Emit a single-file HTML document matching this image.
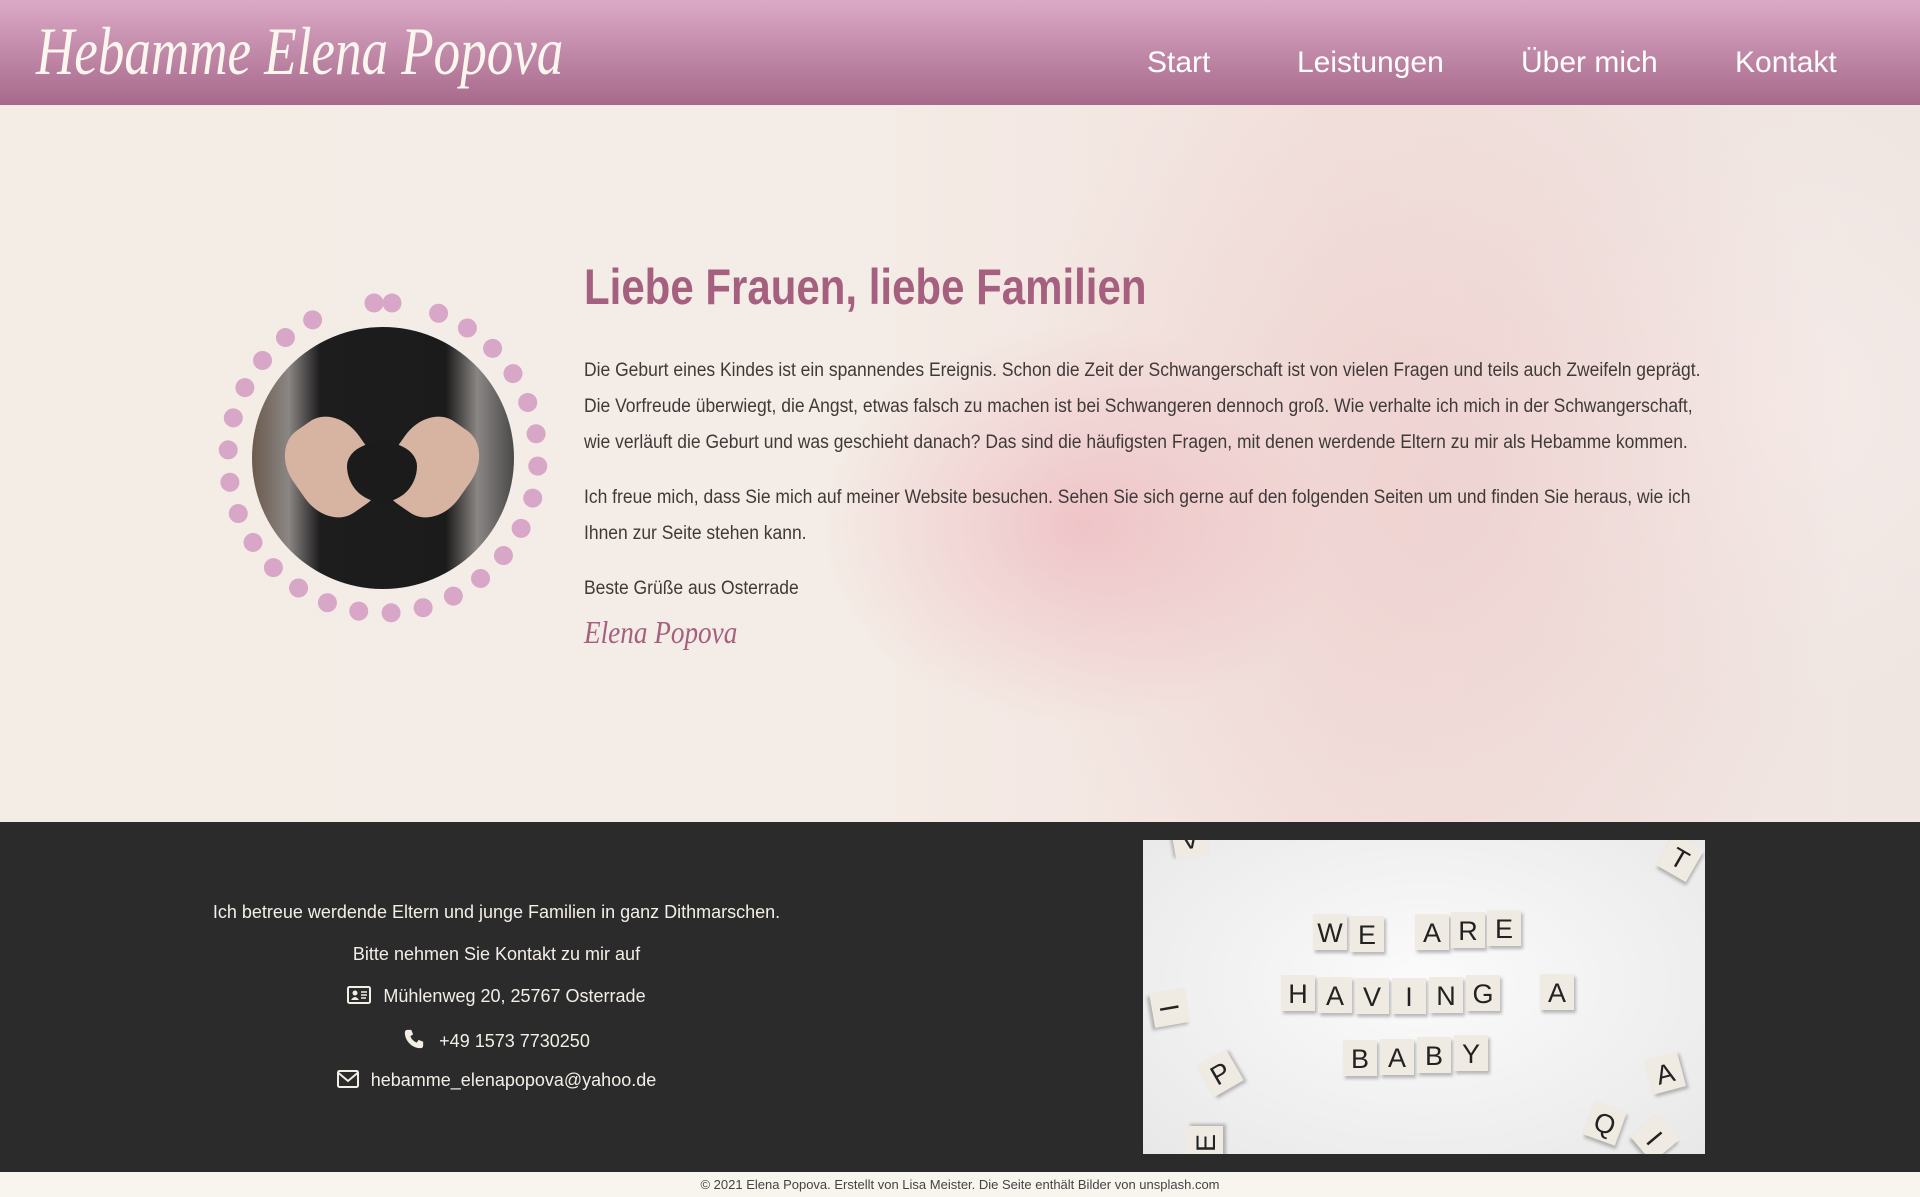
<!DOCTYPE html>
<html><head><meta charset="utf-8"><style>
*{margin:0;padding:0;box-sizing:border-box}
body{width:1920px;height:1197px;overflow:hidden;font-family:"Liberation Sans",sans-serif;background:#f8f4ee}
header{position:absolute;left:0;top:0;width:1920px;height:105px;background:linear-gradient(#dba9c6,#a7698b)}
.logo{position:absolute;left:36px;top:12px;font-family:"Liberation Serif",serif;font-style:italic;font-size:68px;color:#fbf6ee;transform:scaleX(.78);transform-origin:left;white-space:nowrap}
nav a{position:absolute;top:46px;font-size:30px;color:#fff;text-decoration:none}
.hero{position:absolute;left:0;top:105px;width:1920px;height:717px;overflow:hidden;
background:radial-gradient(ellipse 260px 200px at 1080px 420px,rgba(236,170,180,.55),transparent),
radial-gradient(ellipse 420px 520px at 1430px 380px,rgba(236,200,200,.6),transparent),
radial-gradient(ellipse 300px 300px at 1780px 300px,rgba(245,235,232,.9),transparent),
linear-gradient(90deg,#f3ede6 0%,#f4ece6 45%,#f2e2de 70%,#efe6e2 100%)}
h1{position:absolute;left:584px;font-size:50px;color:#a5607f;font-weight:bold;transform:scaleX(.84);transform-origin:left;white-space:nowrap}
.p{position:absolute;left:584px;font-size:19px;color:#3f3a38;line-height:36px;white-space:nowrap;transform:scaleX(.92);transform-origin:left}
.sig{position:absolute;left:584px;font-family:"Liberation Serif",serif;font-style:italic;font-size:32px;color:#a5607f;transform:scaleX(.85);transform-origin:left}
.photo{position:absolute;left:252px;width:262px;height:262px;border-radius:50%;overflow:hidden;
background:linear-gradient(90deg,#6b5a4c 0%,#8a8684 14%,#1d1d1d 26%,#1b1b1b 74%,#8a8684 86%,#4a4a4a 100%)}
.hand{position:absolute;background:#d7b3a2;border-radius:40%}
footer{position:absolute;left:0;top:822px;width:1920px;height:350px;background:#2b2b2b}
.f{position:absolute;left:0;width:993px;text-align:center;color:#f3eee6;font-size:18px}
.strip{position:absolute;left:0;top:1172px;width:1920px;height:25px;background:#f8f4ee;text-align:center;font-size:13px;color:#444;line-height:25px}
.img{position:absolute;left:1143px;top:840px;width:562px;height:314px;background:radial-gradient(ellipse at 50% 45%,#fbfbfb,#e8e8e8);overflow:hidden}
.t{position:absolute;width:34px;height:36px;background:#f0ebe2;box-shadow:2px 3px 3px rgba(0,0,0,.25);font-size:27px;color:#222;text-align:center;line-height:38px}
</style></head><body>
<header><div class="logo">Hebamme Elena Popova</div>
<nav><a style="left:1147px">Start</a><a style="left:1297px">Leistungen</a><a style="left:1521px">Über mich</a><a style="left:1735px">Kontakt</a></nav></header>
<div class="hero">
<svg style="position:absolute;left:213px;top:183px" width="340" height="340" viewBox="-170 -170 340 340">
<g fill="#d8a6c6">
<circle cx="-9" cy="-155" r="9.5"/><circle cx="9" cy="-155" r="9.5"/>
<circle r="9.5" cx="0" cy="-155" transform="rotate(21)"/><circle r="9.5" cx="0" cy="-155" transform="rotate(33)"/><circle r="9.5" cx="0" cy="-155" transform="rotate(45)"/><circle r="9.5" cx="0" cy="-155" transform="rotate(57)"/><circle r="9.5" cx="0" cy="-155" transform="rotate(69)"/><circle r="9.5" cx="0" cy="-155" transform="rotate(81)"/><circle r="9.5" cx="0" cy="-155" transform="rotate(93)"/><circle r="9.5" cx="0" cy="-155" transform="rotate(105)"/><circle r="9.5" cx="0" cy="-155" transform="rotate(117)"/><circle r="9.5" cx="0" cy="-155" transform="rotate(129)"/><circle r="9.5" cx="0" cy="-155" transform="rotate(141)"/><circle r="9.5" cx="0" cy="-155" transform="rotate(153)"/><circle r="9.5" cx="0" cy="-155" transform="rotate(165)"/><circle r="9.5" cx="0" cy="-155" transform="rotate(177)"/><circle r="9.5" cx="0" cy="-155" transform="rotate(189)"/><circle r="9.5" cx="0" cy="-155" transform="rotate(201)"/><circle r="9.5" cx="0" cy="-155" transform="rotate(213)"/><circle r="9.5" cx="0" cy="-155" transform="rotate(225)"/><circle r="9.5" cx="0" cy="-155" transform="rotate(237)"/><circle r="9.5" cx="0" cy="-155" transform="rotate(249)"/><circle r="9.5" cx="0" cy="-155" transform="rotate(261)"/><circle r="9.5" cx="0" cy="-155" transform="rotate(273)"/><circle r="9.5" cx="0" cy="-155" transform="rotate(285)"/><circle r="9.5" cx="0" cy="-155" transform="rotate(297)"/><circle r="9.5" cx="0" cy="-155" transform="rotate(309)"/><circle r="9.5" cx="0" cy="-155" transform="rotate(321)"/><circle r="9.5" cx="0" cy="-155" transform="rotate(333)"/>
</g></svg>
<div class="photo" style="top:222px">
<div class="hand" style="left:40px;top:90px;width:80px;height:100px;transform:rotate(-35deg)"></div>
<div class="hand" style="left:140px;top:90px;width:80px;height:100px;transform:rotate(35deg)"></div>
<div style="position:absolute;left:95px;top:115px;width:70px;height:60px;background:#1b1b1b;border-radius:50%/40% 40% 60% 60%"></div>
</div>
<h1 style="top:153px">Liebe Frauen, liebe Familien</h1>
<div class="p" style="top:248px">Die Geburt eines Kindes ist ein spannendes Ereignis. Schon die Zeit der Schwangerschaft ist von vielen Fragen und teils auch Zweifeln geprägt.<br>Die Vorfreude überwiegt, die Angst, etwas falsch zu machen ist bei Schwangeren dennoch groß. Wie verhalte ich mich in der Schwangerschaft,<br>wie verläuft die Geburt und was geschieht danach? Das sind die häufigsten Fragen, mit denen werdende Eltern zu mir als Hebamme kommen.</div>
<div class="p" style="top:375px">Ich freue mich, dass Sie mich auf meiner Website besuchen. Sehen Sie sich gerne auf den folgenden Seiten um und finden Sie heraus, wie ich<br>Ihnen zur Seite stehen kann.</div>
<div class="p" style="top:466px">Beste Grüße aus Osterrade</div>
<div class="sig" style="top:509px">Elena Popova</div>
</div>
<footer>
<div class="f" style="top:80px">Ich betreue werdende Eltern und junge Familien in ganz Dithmarschen.</div>
<div class="f" style="top:122px">Bitte nehmen Sie Kontakt zu mir auf</div>
<div class="f" style="top:164px"><svg width="24" height="18" viewBox="0 0 24 18" style="vertical-align:-2px;margin-right:12px"><rect x="1" y="1" width="22" height="16" rx="1.5" fill="none" stroke="#f3eee6" stroke-width="2"/><circle cx="8" cy="7" r="2.5" fill="#f3eee6"/><path d="M4 14q4-6 8 0z" fill="#f3eee6"/><path d="M14 6h6M14 9h6M14 12h5" stroke="#f3eee6" stroke-width="1.6"/></svg>Mühlenweg 20, 25767 Osterrade</div>
<div class="f" style="top:206px"><svg width="22" height="22" viewBox="0 0 24 24" style="vertical-align:-3px;margin-right:14px"><path d="M5 2l4 0 2 5-3 2q2 5 7 7l2-3 5 2 0 4q0 3-3 3C10 22 2 14 2 5q0-3 3-3z" fill="#f3eee6"/></svg>+49 1573 7730250</div>
<div class="f" style="top:248px"><svg width="22" height="18" viewBox="0 0 22 18" style="vertical-align:-2px;margin-right:12px"><rect x="1" y="1" width="20" height="16" rx="1.5" fill="none" stroke="#f3eee6" stroke-width="2"/><path d="M1.5 3l9.5 8 9.5-8" fill="none" stroke="#f3eee6" stroke-width="2"/></svg>hebamme_elenapopova@yahoo.de</div>
<div class="img" style="top:18px">
<div class="t" style="left:170px;top:74px">W</div><div class="t" style="left:207px;top:76px">E</div>
<div class="t" style="left:272px;top:74px">A</div><div class="t" style="left:308px;top:72px">R</div><div class="t" style="left:344px;top:70px">E</div>
<div class="t" style="left:138px;top:135px">H</div><div class="t" style="left:175px;top:137px">A</div><div class="t" style="left:212px;top:138px">V</div><div class="t" style="left:249px;top:138px">I</div><div class="t" style="left:286px;top:137px">N</div><div class="t" style="left:323px;top:135px">G</div>
<div class="t" style="left:397px;top:134px">A</div>
<div class="t" style="left:200px;top:200px">B</div><div class="t" style="left:237px;top:199px">A</div><div class="t" style="left:274px;top:197px">B</div><div class="t" style="left:311px;top:195px">Y</div>
<div class="t" style="left:10px;top:150px;transform:rotate(80deg)">I</div>
<div class="t" style="left:60px;top:215px;transform:rotate(-30deg)">P</div>
<div class="t" style="left:505px;top:215px;transform:rotate(-15deg)">A</div>
<div class="t" style="left:445px;top:265px;transform:rotate(20deg)">Q</div>
<div class="t" style="left:495px;top:280px;transform:rotate(50deg)">I</div>
<div class="t" style="left:45px;top:285px;transform:rotate(-90deg)">E</div>
<div class="t" style="left:520px;top:0px;transform:rotate(30deg)">T</div>
<div class="t" style="left:30px;top:-18px;transform:rotate(170deg)">A</div>
</div>
</footer>
<div class="strip">© 2021 Elena Popova. Erstellt von Lisa Meister. Die Seite enthält Bilder von unsplash.com</div>
</body></html>
